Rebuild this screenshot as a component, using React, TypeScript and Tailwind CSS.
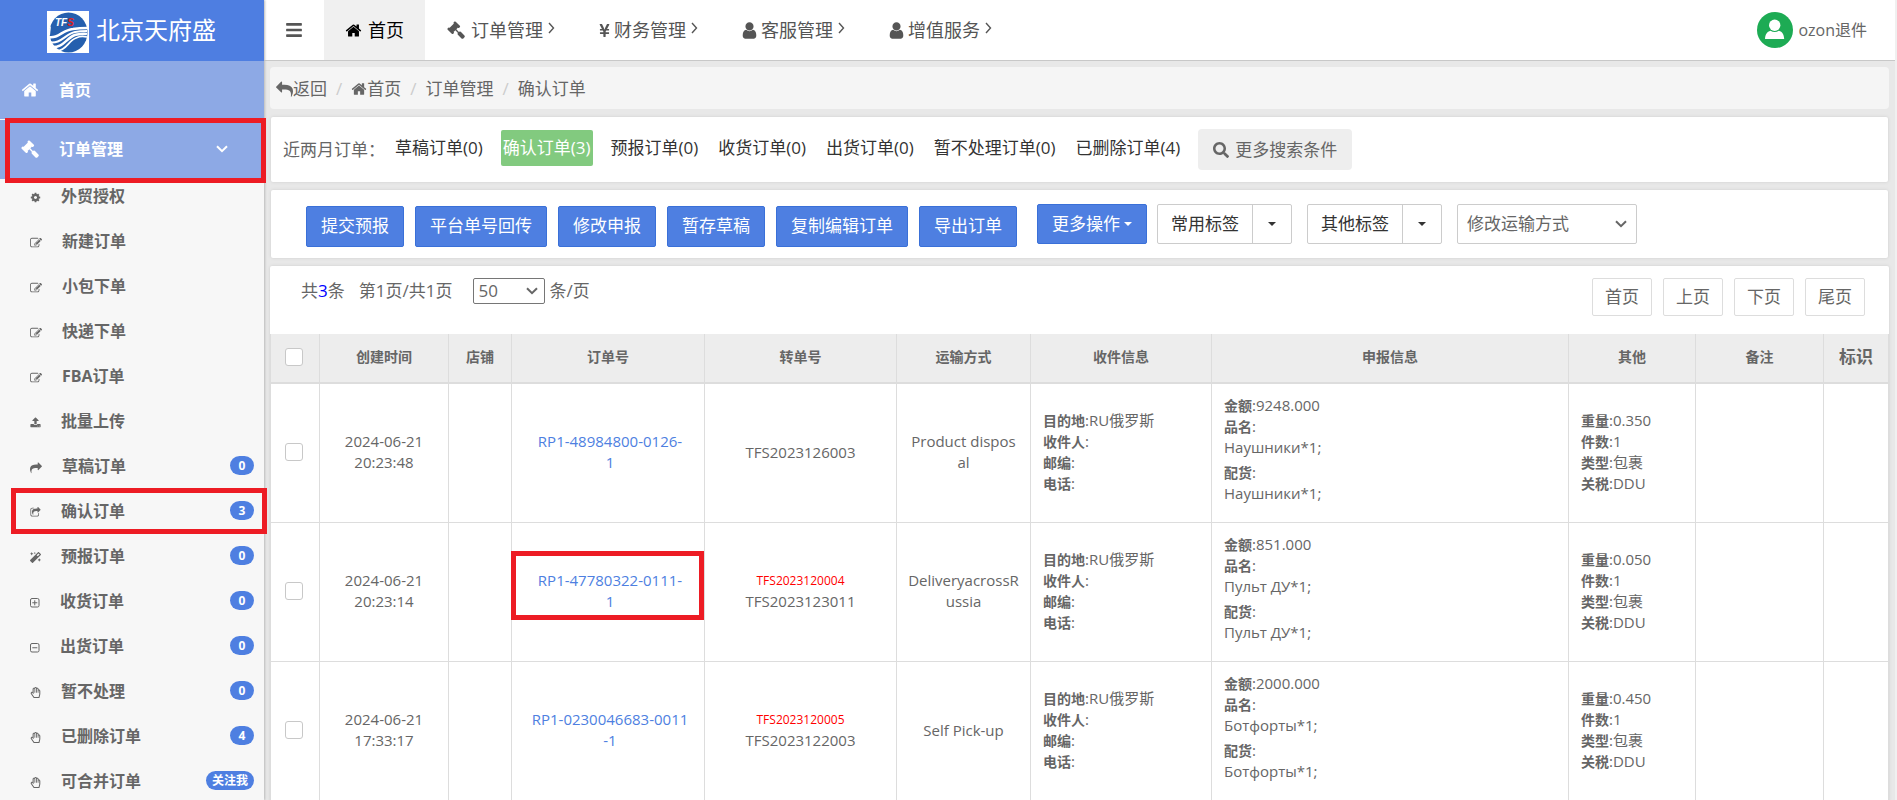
import type { ReactNode } from 'react'
import clsx from 'clsx'
import { FaBars, FaMagic, FaRegHandPaper, FaSearch, FaYenSign } from 'react-icons/fa'

type IconProps = { className?: string }

const icons = {
  home: 'M1472 992v480q0 26-19 45t-45 19h-384v-384h-256v384h-384q-26 0-45-19t-19-45v-480q0-1 .5-3t.5-3l575-474 575 474q1 2 1 6zm223-69l-62 74q-8 9-21 11h-3q-13 0-21-7l-692-577-692 577q-12 8-24 7-13-2-21-11l-62-74q-8-10-7-23.5t11-21.5l719-599q32-26 76-26t76 26l244 204v-195q0-14 9-23t23-9h192q14 0 23 9t9 23v408l219 182q10 8 11 21.5t-7 23.5z',
  gavel:
    'M1771 1536q0 53-37 90l-107 108q-39 37-91 37-53 0-90-37l-363-364q-38-36-38-90 0-53 43-96l-256-256-126 126q-14 14-34 14t-34-14q2 2 12.5 12t12.5 13 10 11.5 10 13.5 6 13.5 5.5 16.5 1.5 18q0 38-28 68-3 3-16.5 18t-19 20.5-18.5 16.5-22 15.5-22 9-26 4.5q-40 0-68-28l-408-408q-28-28-28-68 0-13 4.5-26t9-22 15.5-22 16.5-18.5 20.5-19 18-16.5q30-28 68-28 10 0 18 1.5t16.5 5.5 13.5 6 13.5 10 11.5 10 13 12.5 12 12.5q-14-14-14-34t14-34l348-348q14-14 34-14t34 14q-2-2-12.5-12t-12.5-13-10-11.5-10-13.5-6-13.5-5.5-16.5-1.5-18q0-38 28-68 3-3 16.5-18t19-20.5 18.5-16.5 22-15.5 22-9 26-4.5q40 0 68 28l408 408q28 28 28 68 0 13-4.5 26t-9 22-15.5 22-16.5 18.5-20.5 19-18 16.5q-30 28-68 28-10 0-18-1.5t-16.5-5.5-13.5-6-13.5-10-11.5-10-13-12.5-12-12.5q14 14 14 34t-14 34l-126 126 256 256q43-43 96-43 52 0 91 37l363 363q37 39 37 91z',
  user: 'M1536 1399q0 109-62.5 187t-150.5 78h-854q-88 0-150.5-78t-62.5-187q0-85 8.5-160.5t31.5-152 58.5-131 94-89 134.5-34.5q131 128 313 128t313-128q76 0 134.5 34.5t94 89 58.5 131 31.5 152 8.5 160.5zm-256-887q0 159-112.5 271.5t-271.5 112.5-271.5-112.5-112.5-271.5 112.5-271.5 271.5-112.5 271.5 112.5 112.5 271.5z',
  edit: 'M888 1184l116-116-152-152-116 116v56h96v96h56zm440-720q-16-16-33 1l-350 350q-17 17-1 33t33-1l350-350q17-17 1-33zm80 594v190q0 119-84.5 203.5t-203.5 84.5h-832q-119 0-203.5-84.5t-84.5-203.5v-832q0-119 84.5-203.5t203.5-84.5h832q63 0 117 25 15 7 18 23 3 17-9 29l-49 49q-14 14-32 8-23-6-45-6h-832q-66 0-113 47t-47 113v832q0 66 47 113t113 47h832q66 0 113-47t47-113v-126q0-13 9-22l64-64q15-15 35-7t20 29zm-96-738l288 288-672 672h-288v-288zm444 132l-92 92-288-288 92-92q28-28 68-28t68 28l152 152q28 28 28 68t-28 68z',
  cog: 'M1152 896q0-106-75-181t-181-75-181 75-75 181 75 181 181 75 181-75 75-181zm512-109v222q0 12-8 23t-20 13l-185 28q-19 54-39 91 35 50 107 138 10 12 10 25t-9 23q-27 37-99 108t-94 71q-12 0-26-9l-138-108q-44 23-91 38-16 136-29 186-7 28-36 28h-222q-14 0-24.5-8.5t-11.5-21.5l-28-184q-49-16-90-37l-141 107q-10 9-25 9-14 0-25-11-126-114-165-168-7-10-7-23 0-12 8-23 15-21 51-66.5t54-70.5q-27-50-41-99l-183-27q-13-2-21-12.5t-8-23.5v-222q0-12 8-23t19-13l186-28q14-46 39-92-40-57-107-138-10-12-10-24 0-10 9-23 26-36 98.5-107.5t94.5-71.5q13 0 26 10l138 107q44-23 91-38 16-136 29-186 7-28 36-28h222q14 0 24.5 8.5t11.5 21.5l28 184q49 16 90 37l142-107q9-9 24-9 13 0 25 10 129 119 165 170 7 8 7 22 0 12-8 23-15 21-51 66.5t-54 70.5q26 50 41 98l183 28q13 2 21 12.5t8 23.5z',
  upload:
    'M1344 1472q0-26-19-45t-45-19-45 19-19 45 19 45 45 19 45-19 19-45zm256 0q0-26-19-45t-45-19-45 19-19 45 19 45 45 19 45-19 19-45zm128-224v320q0 40-28 68t-68 28h-1472q-40 0-68-28t-28-68v-320q0-40 28-68t68-28h427q21 56 70.5 92t110.5 36h256q61 0 110.5-36t70.5-92h427q40 0 68 28t28 68zm-325-648q-17 40-59 40h-256v448q0 26-19 45t-45 19h-256q-26 0-45-19t-19-45v-448h-256q-42 0-59-40-17-39 14-69l448-448q18-19 45-19t45 19l448 448q31 30 14 69z',
  share:
    'M1792 640q0 26-19 45l-512 512q-19 19-45 19t-45-19-19-45v-256h-224q-98 0-175.5 6t-154 21.5-133 42.5-105.5 69.5-80 101-48.5 138.5-17.5 181q0 55 5 123 0 6 2.5 23.5t2.5 26.5q0 15-8.5 25t-23.5 10q-16 0-28-17-7-9-13-22t-13.5-30-10.5-24q-127-285-127-451 0-199 53-333 162-403 875-403h224v-256q0-26 19-45t45-19 45 19l512 512q19 19 19 45z',
  shareSquare:
    'M1472 989v259q0 119-84.5 203.5t-203.5 84.5h-832q-119 0-203.5-84.5t-84.5-203.5v-832q0-119 84.5-203.5t203.5-84.5h255q13 0 22.5 9.5t9.5 22.5q0 27-26 32-77 26-133 60-10 4-16 4h-112q-66 0-113 47t-47 113v832q0 66 47 113t113 47h832q66 0 113-47t47-113v-214q0-19 18-29 28-13 54-37 16-16 35-8 21 9 21 29zm237-496l-384 384q-18 19-45 19-12 0-25-5-39-17-39-59v-192h-160q-323 0-438 131-119 137-74 473 3 23-20 34-8 2-12 2-16 0-26-13-10-14-21-31t-39.5-68.5-49.5-99.5-38.5-114-17.5-122q0-49 3.5-91t14-90 28-88 47-81.5 68.5-74 94.5-61.5 124.5-48.5 159.5-30.5 196.5-11h160v-192q0-42 39-59 13-5 25-5 26 0 45 19l384 384q19 19 19 45t-19 45z',
}

function Icon({ name, className }: IconProps & { name: keyof typeof icons }) {
  return (
    <svg viewBox="0 0 1792 1792" fill="currentColor" className={clsx('shrink-0', className)} aria-hidden="true">
      <path d={icons[name]} />
    </svg>
  )
}

function BoxIcon({ plus }: { plus?: boolean }) {
  return (
    <svg viewBox="0 0 10 10" className="size-[10px] shrink-0" fill="none" stroke="currentColor" aria-hidden="true">
      <rect x="0.5" y="0.5" width="8.5" height="8.5" rx="1.5" />
      <path d={plus ? 'M2.3 4.75h5M4.75 2.3v5' : 'M2.3 4.75h5'} />
    </svg>
  )
}

function Chevron({ className }: IconProps) {
  return (
    <svg viewBox="0 0 12 8" className={className} fill="none" stroke="currentColor" strokeWidth="2" aria-hidden="true">
      <path d="M1 1.2l5 5 5-5" />
    </svg>
  )
}

function Caret({ className }: IconProps) {
  return (
    <svg viewBox="0 0 8 4" className={clsx('h-1 w-2 shrink-0', className)} fill="currentColor" aria-hidden="true">
      <path d="M0 0h8L4 4z" />
    </svg>
  )
}

function Logo() {
  return (
    <svg viewBox="0 0 42 42" className="size-[42px]" aria-hidden="true">
      <rect width="42" height="42" fill="#fff" />
      <ellipse cx="21.5" cy="21.5" rx="19" ry="20" fill="#255fae" />
      <g fill="none" stroke="#fff">
        <path d="M1 26c11 2 14-7 25-8 6-1 10-1 15-1" strokeWidth="2.6" />
        <path d="M1 31c13 3 17-8 27-10 5-1 8-1 12-1" strokeWidth="2" />
        <path d="M4 36c13 1 15-9 24-12 5-1 8-2 12-1" strokeWidth="2.4" />
        <path d="M10 40c10-1 11-10 19-13 4-2 7-2 11-1" strokeWidth="1.8" />
      </g>
      <path d="M0 21l4-6-1 9-3 1z" fill="#fff" />
      <text x="8" y="15" fontFamily="Liberation Sans" fontSize="10" fontWeight="bold" fontStyle="italic" fill="#fff">
        TF<tspan fill="#e02020">S</tspan>
      </text>
    </svg>
  )
}

const handIcon = <FaRegHandPaper className="size-[11px] shrink-0" />
const editIcon = <Icon name="edit" className="size-3" />

const menuItems: { icon: ReactNode; label: string; badge?: string; marked?: boolean }[] = [
  { icon: <Icon name="cog" className="size-[11px]" />, label: '外贸授权' },
  { icon: editIcon, label: '新建订单' },
  { icon: editIcon, label: '小包下单' },
  { icon: editIcon, label: '快递下单' },
  { icon: editIcon, label: 'FBA订单' },
  { icon: <Icon name="upload" className="size-[11px]" />, label: '批量上传' },
  { icon: <Icon name="share" className="size-3" />, label: '草稿订单', badge: '0' },
  { icon: <Icon name="shareSquare" className="size-[11px]" />, label: '确认订单', badge: '3', marked: true },
  { icon: <FaMagic className="size-[11px] shrink-0" />, label: '预报订单', badge: '0' },
  { icon: <BoxIcon plus />, label: '收货订单', badge: '0' },
  { icon: <BoxIcon />, label: '出货订单', badge: '0' },
  { icon: handIcon, label: '暂不处理', badge: '0' },
  { icon: handIcon, label: '已删除订单', badge: '4' },
  { icon: handIcon, label: '可合并订单', badge: '关注我' },
]

const topItems = [
  { icon: <Icon name="gavel" className="mr-1.5 size-[18px]" />, label: '订单管理' },
  { icon: <FaYenSign className="mr-1 h-[15px] w-[11px]" />, label: '财务管理' },
  { icon: <Icon name="user" className="mr-0.5 -ml-0.5 size-[19px]" />, label: '客服管理' },
  { icon: <Icon name="user" className="mr-0.5 -ml-0.5 size-[19px]" />, label: '增值服务' },
]

const statusTabs = ['草稿订单(0)', '确认订单(3)', '预报订单(0)', '收货订单(0)', '出货订单(0)', '暂不处理订单(0)', '已删除订单(4)']
const actions = ['提交预报', '平台单号回传', '修改申报', '暂存草稿', '复制编辑订单', '导出订单']
const headers = ['创建时间', '店铺', '订单号', '转单号', '运输方式', '收件信息', '申报信息', '其他', '备注']

const orders = [
  {
    time: ['2024-06-21', '20:23:48'],
    no: ['RP1-48984800-0126-', '1'],
    oldTransfer: '',
    transfer: 'TFS2023126003',
    shipping: ['Product dispos', 'al'],
    amount: '9248.000',
    goods: 'Наушники*1;',
    weight: '0.350',
  },
  {
    time: ['2024-06-21', '20:23:14'],
    no: ['RP1-47780322-0111-', '1'],
    oldTransfer: 'TFS2023120004',
    transfer: 'TFS2023123011',
    shipping: ['DeliveryacrossR', 'ussia'],
    amount: '851.000',
    goods: 'Пульт ДУ*1;',
    weight: '0.050',
    marked: true,
  },
  {
    time: ['2024-06-21', '17:33:17'],
    no: ['RP1-0230046683-0011', '-1'],
    oldTransfer: 'TFS2023120005',
    transfer: 'TFS2023122003',
    shipping: ['Self Pick-up'],
    amount: '2000.000',
    goods: 'Ботфорты*1;',
    weight: '0.450',
  },
]

function Sidebar() {
  return (
    <aside className="relative z-10 w-[264px] shrink-0 bg-[#f7f7f7] shadow-[1px_0_2px_#bbb]">
      <div className="flex h-[61px] items-center gap-[7px] bg-[#4e7ee1] pt-0.5 pl-[47px] text-2xl text-white">
        <Logo />
        <span className="pb-1">北京天府盛</span>
      </div>
      <nav className="font-bold text-[#666]">
        <a href="#home" className="flex h-[58px] items-center bg-[#8da9e5] pl-[21px] text-white">
          <Icon name="home" className="mr-5 size-[18px]" />
          首页
        </a>
        <div className="relative mt-px">
          <a href="#orders" className="flex h-[59px] items-center bg-[#8da9e5] pr-9 pb-0.5 pl-[21px] text-white">
            <Icon name="gavel" className="mr-5 size-[18px]" />
            订单管理
            <Chevron className="ml-auto h-2 w-3" />
          </a>
          <span className="absolute -top-0.5 -right-0.5 left-[5px] h-[65px] border-5 border-[#ed1c24]" />
        </div>
        <ul className="-mt-1.5">
          {menuItems.map((item) => (
            <li key={item.label} className="relative">
              <a href={`#${item.label}`} className="flex h-[45px] items-center pr-2.5 pl-[30px]">
                <span className="mt-1 mr-5">{item.icon}</span>
                {item.label}
                {item.badge && (
                  <span className="ml-auto h-[19px] min-w-6 rounded-full bg-[#4e7fe1] px-1.5 text-center text-xs leading-[19px] text-white">
                    {item.badge}
                  </span>
                )}
              </a>
              {item.marked && (
                <span className="absolute top-0 -right-[3px] left-[11px] h-[46px] border-5 border-[#ed1c24]" />
              )}
            </li>
          ))}
        </ul>
      </nav>
    </aside>
  )
}

function TopBar() {
  return (
    <header className="flex h-[61px] shrink-0 border-b border-[#c8c8c8] bg-white pr-7 text-lg text-[#555]">
      <button type="button" aria-label="菜单" className="w-[60px] pl-[21px]">
        <FaBars className="size-[18px]" />
      </button>
      <a href="#home" className="flex items-center gap-1.5 bg-[#f0f0f0] px-[21px] text-black">
        <Icon name="home" className="size-[17px]" />
        首页
      </a>
      {topItems.map((item) => (
        <a key={item.label} href={`#${item.label}`} className="flex items-center px-[22px]">
          {item.icon}
          {item.label}
          <svg
            viewBox="0 0 7 12"
            className="mb-1 ml-[5px] h-3 w-[7px]"
            fill="none"
            stroke="currentColor"
            strokeWidth="1.4"
            aria-hidden="true"
          >
            <path d="M1 1l4.5 5L1 11" />
          </svg>
        </a>
      ))}
      <a href="#account" className="ml-auto flex items-center gap-[5px] text-base text-[#666]">
        <svg viewBox="0 0 36 36" className="size-9" aria-hidden="true">
          <circle cx="18" cy="18" r="18" fill="#1dab54" />
          <circle cx="17.7" cy="13.3" r="5.7" fill="#fff" />
          <path d="M8 27c.4-5 2-7 5.5-8.2 2.600 1.700 5.800 1.700 8.400 0C25.400 20 26.800 22 27.200 27z" fill="#fff" />
        </svg>
        ozon退件
      </a>
    </header>
  )
}

function Breadcrumb() {
  const slash = <span className="mx-[9px] text-[#ccc]">/</span>
  return (
    <nav className="-mx-px flex h-[42px] items-center rounded bg-[#f5f5f5] px-1.5 pt-0.5">
      <a href="#back" className="flex items-center">
        <Icon name="share" className="size-[17px] -scale-x-100" />
        返回
      </a>
      {slash}
      <a href="#home" className="flex items-center">
        <Icon name="home" className="size-4" />
        首页
      </a>
      {slash}
      <span>订单管理</span>
      {slash}
      <span>确认订单</span>
    </nav>
  )
}

function SplitButton({ label }: { label: string }) {
  return (
    <div className="flex h-10 rounded-xs border border-[#ccc] bg-white text-[#333]">
      <button type="button" className="px-[13px]">
        {label}
      </button>
      <button type="button" aria-label={`${label}选项`} className="border-l border-[#ccc] px-[15px]">
        <Caret />
      </button>
    </div>
  )
}

function Checkbox({ label }: { label: string }) {
  return (
    <input
      type="checkbox"
      aria-label={label}
      className="mx-auto block size-[18px] appearance-none rounded-[3px] border border-[#c8c8c8] bg-white checked:bg-[#4e7fe1]"
    />
  )
}

function Lines({ lines }: { lines: string[] }) {
  return lines.map((line) => (
    <span key={line} className="block whitespace-nowrap">
      {line}
    </span>
  ))
}

function Field({ label, value }: { label: string; value?: string }) {
  return (
    <p>
      <b className="text-sm leading-[20px]">{label}</b>:{value}
    </p>
  )
}

function OrderTable() {
  return (
    <table className="w-full table-fixed border-separate border-spacing-0 border-r border-[#ddd] text-[15px] leading-[21px]">
      <colgroup>
        <col className="w-[49px]" />
        <col className="w-[129px]" />
        <col className="w-[63px]" />
        <col className="w-[193px]" />
        <col className="w-[192px]" />
        <col className="w-[134px]" />
        <col className="w-[181px]" />
        <col />
        <col className="w-[127px]" />
        <col className="w-[128px]" />
        <col className="w-[65px]" />
      </colgroup>
      <thead>
        <tr className="h-[50px] bg-[#ededed] text-sm *:border-b-2 *:border-l *:border-[#ddd] *:pb-0.5">
          <th className="pr-0.5">
            <Checkbox label="全选" />
          </th>
          {headers.map((h) => (
            <th key={h}>{h}</th>
          ))}
          <th className="text-[17px]">标识</th>
        </tr>
      </thead>
      <tbody>
        {orders.map((order) => (
          <tr key={order.transfer} className="h-[139px] text-center *:border-b *:border-l *:border-[#ddd]">
            <td className="pr-0.5 pb-0.5">
              <Checkbox label={order.transfer} />
            </td>
            <td className="pb-0.5">
              <Lines lines={order.time} />
            </td>
            <td />
            <td className="relative pb-0.5 pl-1">
              <a href={`#${order.transfer}`} className="block text-[#4e7fe1]">
                <Lines lines={order.no} />
              </a>
              {order.marked && (
                <span className="absolute top-7 right-0 -left-px h-[69px] border-5 border-[#ed1c24]" />
              )}
            </td>
            <td className="pb-0.5">
              {order.oldTransfer && <span className="block text-xs leading-[21px] text-[#f00]">{order.oldTransfer}</span>}
              {order.transfer}
            </td>
            <td className="pb-0.5">
              <Lines lines={order.shipping} />
            </td>
            <td className="px-3 pb-0.5 text-left">
              <Field label="目的地" value="RU俄罗斯" />
              <Field label="收件人" />
              <Field label="邮编" />
              <Field label="电话" />
            </td>
            <td className="px-3 pb-2 text-left">
              <Field label="金额" value={order.amount} />
              <Field label="品名" />
              <p className="mb-1">{order.goods}</p>
              <Field label="配货" />
              <p>{order.goods}</p>
            </td>
            <td className="px-3 pb-0.5 text-left">
              <Field label="重量" value={order.weight} />
              <Field label="件数" value="1" />
              <Field label="类型" value="包裹" />
              <Field label="关税" value="DDU" />
            </td>
            <td />
            <td />
          </tr>
        ))}
      </tbody>
    </table>
  )
}

export default function App() {
  return (
    <div className="flex h-screen overflow-hidden bg-[#f0f0f0] pr-0.5 font-['Open_Sans','Noto_Sans_CJK_SC',sans-serif] text-base leading-6">
      <Sidebar />
      <div className="flex min-w-0 flex-1 flex-col bg-[#e8e8e8]">
        <TopBar />
        <main className="flex flex-col gap-2 pt-1.5 pr-[7px] pl-[7px] text-[17px] text-[#666]">
          <Breadcrumb />

          <section className="flex h-[65px] items-center rounded-xs bg-white px-3 text-[#333] shadow-[0_0_3px_#ccc]">
            <span className="mr-2 text-[#666]">近两月订单：</span>
            <div className="mb-1 flex gap-4">
              {statusTabs.map((tab, i) => (
                <a
                  key={tab}
                  href={`#${tab}`}
                  className={clsx('px-0.5 leading-9', i === 1 && 'rounded-xs bg-[#82ca7f] text-white')}
                >
                  {tab}
                </a>
              ))}
            </div>
            <button type="button" className="ml-4 flex h-[41px] items-center gap-1.5 rounded-sm bg-[#eee] px-[15px] text-[#666]">
              <FaSearch className="size-4" />
              更多搜索条件
            </button>
          </section>

          <section className="flex h-[68px] items-center rounded-xs bg-white px-[35px] shadow-[0_0_3px_#ccc]">
            <div className="mt-1 flex gap-[11px] text-white">
              {actions.map((a) => (
                <button key={a} type="button" className="h-[41px] rounded-xs border border-[#3a70d8] bg-[#4e7fe1] px-3.5">
                  {a}
                </button>
              ))}
            </div>
            <button
              type="button"
              className="mr-2.5 ml-5 flex h-10 items-center gap-1 rounded-xs border border-[#3a70d8] bg-[#4e7fe1] px-3.5 text-white"
            >
              更多操作
              <Caret />
            </button>
            <div className="flex gap-[15px]">
              <SplitButton label="常用标签" />
              <SplitButton label="其他标签" />
              <div className="relative">
                <select
                  aria-label="修改运输方式"
                  className="h-10 w-[180px] appearance-none rounded-xs border border-[#ccc] bg-white px-[9px]"
                >
                  <option>修改运输方式</option>
                </select>
                <Chevron className="pointer-events-none absolute top-4 right-2.5 h-2 w-3" />
              </div>
            </div>
          </section>

          <section className="-mx-px rounded-t-xs bg-white shadow-[0_0_3px_#ccc]">
            <div className="flex h-[68px] items-start justify-between pt-3 pr-6 pl-[31px]">
              <div className="flex items-center">
                <span>
                  共<span className="text-[#00f]">3</span>条
                </span>
                <span className="ml-3.5">第1页/共1页</span>
                <div className="relative mr-1 ml-[21px]">
                  <select
                    aria-label="每页条数"
                    className="block h-[26px] w-[72px] appearance-none rounded-xs border border-[#767676] bg-white px-1 leading-6"
                  >
                    <option>50</option>
                  </select>
                  <Chevron className="pointer-events-none absolute top-[9px] right-[7px] h-2 w-3" />
                </div>
                <span>条/页</span>
              </div>
              <div className="flex gap-[11px]">
                {['首页', '上页', '下页', '尾页'].map((p) => (
                  <button key={p} type="button" className="h-[38px] rounded-xs border border-[#ddd] bg-white px-3">
                    {p}
                  </button>
                ))}
              </div>
            </div>
            <OrderTable />
          </section>
        </main>
      </div>
    </div>
  )
}
